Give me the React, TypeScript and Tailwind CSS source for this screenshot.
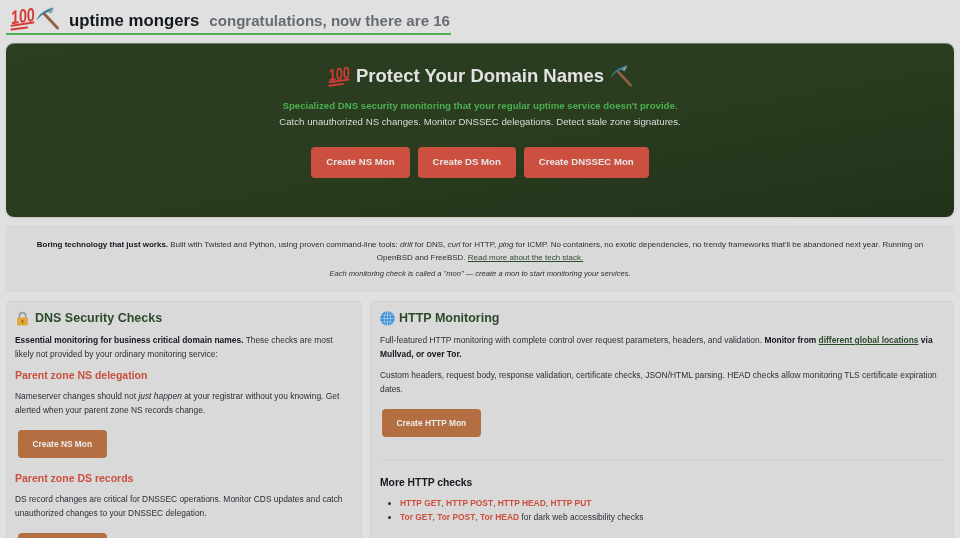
const sans = { fontFamily: '"Liberation Sans", Arial, sans-serif' };

function Hundred({ className }: { className: string }) {
  return (
    <svg viewBox="0 0 24 24" className={`shrink-0 ${className}`} aria-hidden="true">
      <text x="1" y="16" fontFamily="Liberation Sans" fontStyle="italic" fontWeight="700" fontSize="18.5" fill="#d43c36" textLength="23" lengthAdjust="spacingAndGlyphs" transform="rotate(-8 12 12)">
        100
      </text>
      <path d="M1.5 19 22.5 15.8" stroke="#d43c36" strokeWidth="2" strokeLinecap="round" />
      <path d="M1.5 22.600 16.500 20.600" stroke="#d43c36" strokeWidth="2" strokeLinecap="round" />
    </svg>
  );
}

function Pick({ className }: { className: string }) {
  return (
    <svg viewBox="0 0 24 24" className={`shrink-0 ${className}`} aria-hidden="true">
      <path d="M8.500 7 22.500 22" stroke="#8f6244" strokeWidth="3" strokeLinecap="round" />
      <path d="M0.500 14C2.500 8 9 2.500 18.500 0.500 15.500 2.800 14 4 12.500 5.500 11 5.500 10 6 8.500 7 5.500 8.800 3 11 0.500 14Z" fill="#3b7d94" />
      <path d="M18.500 0.500C18.500 2.500 17.500 4.500 15.500 7 14.500 6 13.500 5.500 12.500 5.500 14 3.800 16 2 18.500 0.500Z" fill="#7f9ea9" />
    </svg>
  );
}

function Lock({ className }: { className: string }) {
  return (
    <svg viewBox="0 0 24 24" className={`shrink-0 ${className}`} aria-hidden="true">
      <path d="M7 12V7.500a5 5 0 0 1 10 0V12" fill="none" stroke="#8fa0a8" strokeWidth="2.600" />
      <rect x="3.500" y="10.500" width="17" height="12.500" rx="2" fill="#e0a63a" />
      <rect x="10.800" y="14" width="2.400" height="5" rx="1.200" fill="#8a5d20" />
    </svg>
  );
}

function Globe({ className }: { className: string }) {
  return (
    <svg viewBox="0 0 24 24" className={`shrink-0 ${className}`} aria-hidden="true">
      <circle cx="12" cy="12" r="11.500" fill="#3f8ed6" />
      <g fill="none" stroke="#b9dcf3" strokeWidth="1">
        <ellipse cx="12" cy="12" rx="5" ry="11.500" />
        <path d="M12 .5v23M.5 12h23M2.500 6.500h19M2.500 17.500h19" />
      </g>
    </svg>
  );
}

const Accent = ({ children }: { children: string }) => (
  <strong className="font-bold text-[#cc4f3e]">{children}</strong>
);

const cardBtn =
  "inline-flex h-[28px] items-center rounded-[4px] bg-[#b36f42] px-[14.500px] text-[8.400px] font-bold text-[#ececec]";

export default function App() {
  return (
    <div className="h-screen overflow-hidden bg-[#e0e0e0]" style={sans}>
      <div className="px-[6px] pt-[6px] text-[#2a2f36] blur-[0.4px]">
        {/* Header */}
        <header className="flex h-[29px] w-[445px] items-center border-b-2 border-[#4caf50] pl-[4px]">
          <Hundred className="mb-[2px] h-[25px] w-[25px]" />
          <Pick className="mb-[2px] ml-[1px] h-[23px] w-[23px]" />
          <h1 className="mt-[2px] ml-[10px] text-[16.750px] font-bold whitespace-nowrap text-[#14181f]">uptime mongers</h1>
          <span className="mt-[4px] ml-[10px] text-[15.100px] font-bold whitespace-nowrap text-[#666b75]">
            congratulations, now there are 16
          </span>
        </header>

        {/* Hero */}
        <section className="mt-[8px] flex h-[174px] flex-col items-center rounded-[8px] border-t border-[#6f7a68] bg-linear-to-br from-[#2c3d22] via-[#2a3d1f] to-[#22321a] pt-[19px] shadow-sm">
          <h2 className="flex h-[26px] items-center gap-[6px] text-[18.500px] font-bold text-[#e2e2e2]">
            <Hundred className="h-[22px] w-[22px]" />
            Protect Your Domain Names
            <Pick className="h-[22px] w-[22px]" />
          </h2>
          <p className="mt-[9px] text-[9.660px] leading-[16px] font-bold text-[#4caf50]">
            Specialized DNS security monitoring that your regular uptime service doesn&apos;t provide.
          </p>
          <p className="text-[9.660px] leading-[16px] text-[#dcdcdc]">
            Catch unauthorized NS changes. Monitor DNSSEC delegations. Detect stale zone signatures.
          </p>
          <div className="mt-[17px] flex gap-[8px]">
            {["Create NS Mon", "Create DS Mon", "Create DNSSEC Mon"].map((label) => (
              <div
                key={label}
                className="flex h-[31px] items-center rounded-[4px] bg-[#cc5040] px-[15px] text-[9.600px] font-bold text-[#e6e6e6]"
              >
                {label}
              </div>
            ))}
          </div>
        </section>

        {/* Tech note */}
        <section className="mt-[8px] h-[67px] rounded-[4px] bg-[#d9d9d9] px-[16px] pt-[13px] text-center text-[7.990px] leading-[13px]">
          <p>
            <strong className="font-bold text-[#14181f]">Boring technology that just works.</strong> Built with Twisted and
            Python, using proven command-line tools: <em>drill</em> for DNS, <em>curl</em> for HTTP, <em>ping</em> for ICMP.
            No containers, no exotic dependencies, no trendy frameworks that&apos;ll be abandoned next year. Running on OpenBSD
            and FreeBSD. <span className="text-[#2d4a2a] underline">Read more about the tech stack.</span>
          </p>
          <p className="mt-[3px] text-[7.550px] italic">
            Each monitoring check is called a &quot;mon&quot; — create a mon to start monitoring your services.
          </p>
        </section>

        {/* Cards */}
        <div className="mt-[9px] grid grid-cols-[356px_1fr] gap-[8px]">
          <section className="h-[400px] rounded-[4px] border border-[#d2d2d2] bg-[#d9d9d9] pt-[7px] pr-[9px] pl-[8px]">
            <h2 className="flex h-[18px] items-center gap-[5px] text-[12.500px] font-bold text-[#2d4a2a]">
              <Lock className="h-[15px] w-[15px]" />
              DNS Security Checks
            </h2>
            <p className="mt-[7px] text-[8.420px] leading-[13.500px]">
              <strong className="font-bold text-[#14181f]">Essential monitoring for business critical domain names.</strong>{" "}
              These checks are most likely not provided by your ordinary monitoring service:
            </p>
            <h3 className="mt-[7px] text-[10.500px] leading-[14px] font-bold text-[#cc4f3e]">Parent zone NS delegation</h3>
            <p className="mt-[8px] text-[8.420px] leading-[13.500px]">
              Nameserver changes should not <em>just happen</em> at your registrar without you knowing. Get alerted when your
              parent zone NS records change.
            </p>
            <div className={`${cardBtn} mt-[13px] ml-[3px]`}>Create NS Mon</div>
            <h3 className="mt-[13px] text-[10.500px] leading-[14px] font-bold text-[#cc4f3e]">Parent zone DS records</h3>
            <p className="mt-[8px] text-[8.420px] leading-[13.500px]">
              DS record changes are critical for DNSSEC operations. Monitor CDS updates and catch unauthorized changes to your
              DNSSEC delegation.
            </p>
            <div className={`${cardBtn} mt-[13px] ml-[3px]`}>Create DS Mon</div>
          </section>

          <section className="h-[400px] rounded-[4px] border border-[#d2d2d2] bg-[#d9d9d9] px-[9px] pt-[7px]">
            <h2 className="flex h-[18px] items-center gap-[4px] text-[12.500px] font-bold text-[#2d4a2a]">
              <Globe className="h-[15px] w-[15px]" />
              HTTP Monitoring
            </h2>
            <p className="mt-[7px] text-[8.420px] leading-[13.500px]">
              Full-featured HTTP monitoring with complete control over request parameters, headers, and validation.{" "}
              <strong className="font-bold text-[#14181f]">
                Monitor from <span className="text-[#2d4a2a] underline">different global locations</span> via Mullvad, or over
                Tor.
              </strong>
            </p>
            <p className="mt-[8px] text-[8.420px] leading-[13.500px]">
              Custom headers, request body, response validation, certificate checks, JSON/HTML parsing. HEAD checks allow
              monitoring TLS certificate expiration dates.
            </p>
            <div className={`${cardBtn} mt-[13px] ml-[2px]`}>Create HTTP Mon</div>
            <hr className="mt-[22px] border-[#cfcfcf]" />
            <h3 className="mt-[16px] text-[10.350px] leading-[14px] font-bold text-[#14181f]">More HTTP checks</h3>
            <ul className="mt-[7px] list-disc pl-[20px] text-[8.420px] leading-[13.500px]">
              <li>
                <Accent>HTTP GET</Accent>, <Accent>HTTP POST</Accent>, <Accent>HTTP HEAD</Accent>, <Accent>HTTP PUT</Accent>
              </li>
              <li>
                <Accent>Tor GET</Accent>, <Accent>Tor POST</Accent>, <Accent>Tor HEAD</Accent> for dark web accessibility checks
              </li>
            </ul>
          </section>
        </div>
      </div>
    </div>
  );
}
